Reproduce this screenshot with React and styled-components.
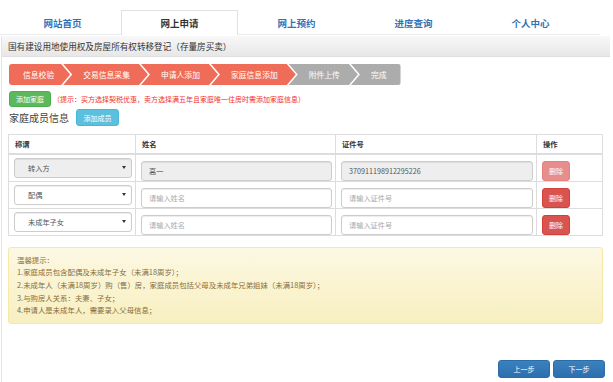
import React from "react";
import styled, { createGlobalStyle } from "styled-components";

const Global = createGlobalStyle`
  html, body { margin: 0; padding: 0; background: #fff; }
  body {
    width: 613px; height: 382px; overflow: hidden;
    font-family: "Noto Sans CJK SC", "Noto Sans", "Liberation Sans", sans-serif;
    color: #333;
  }
  * { box-sizing: border-box; }
`;

const Page = styled.div`
  width: 613px;
  height: 382px;
  display: flex;
  flex-direction: column;
`;

const TabBar = styled.nav`
  display: flex;
  padding: 10px 0 0 4px;
  height: 35px;
  width: 600px;
  border-bottom: 1px solid #ececec;
`;

const Tab = styled.div`
  width: 117px;
  height: 25px;
  display: flex;
  align-items: center;
  justify-content: center;
  font-size: 9.5px;
  font-weight: 700;
  color: ${(p) => (p.$active ? "#333" : "#3272b5")};
  background: ${(p) => (p.$active ? "#fff" : "transparent")};
  border: 1px solid ${(p) => (p.$active ? "#e2e2e2" : "transparent")};
  border-bottom: none;
  margin-bottom: -1px;
`;

const Main = styled.main`
  flex: 1;
  margin: 1px 0 0 1px;
  width: 609px;
  border-left: 1px solid #e4e4e4;
  display: flex;
  flex-direction: column;
`;

const TitleBar = styled.div`
  height: 21px;
  display: flex;
  align-items: center;
  padding-left: 6px;
  font-size: 8.6px;
  color: #333;
  background: linear-gradient(#f8f8f8, #e7e7e7);
  border-bottom: 1px solid #e0e0e0;
`;

const Content = styled.div`
  padding: 7px 5px 0 6px;
  display: flex;
  flex-direction: column;
`;

const Steps = styled.div`
  display: flex;
  align-self: flex-start;
  margin-left: 1px;
  height: 21px;
  border-radius: 3px;
  overflow: hidden;
`;

const Step = styled.div`
  height: 21px;
  display: flex;
  align-items: center;
  font-size: 7.8px;
  color: #fff;
  background: ${(p) => (p.$done ? "#ef6d58" : "#acacac")};
  padding: ${(p) => (p.$first ? "0 16px 0 14px" : p.$last ? "0 14px 0 20px" : "0 18px 0 20px")};
  margin-left: ${(p) => (p.$first ? "0" : "-7px")};
  clip-path: ${(p) =>
    p.$first
      ? "polygon(0 0, calc(100% - 9px) 0, 100% 50%, calc(100% - 9px) 100%, 0 100%)"
      : p.$last
      ? "polygon(0 0, 100% 0, 100% 100%, 0 100%, 9px 50%)"
      : "polygon(0 0, calc(100% - 9px) 0, 100% 50%, calc(100% - 9px) 100%, 0 100%, 9px 50%)"};
`;

const ActionRow = styled.div`
  display: flex;
  align-items: center;
  margin-top: 6px;
  margin-left: 1px;
`;

const Btn = styled.button`
  font-family: inherit;
  font-size: 7px;
  color: #fff;
  height: ${(p) => p.$h || 17}px;
  width: ${(p) => p.$w}px;
  padding: 0;
  border-radius: 3px;
  cursor: pointer;
  display: inline-flex;
  align-items: center;
  justify-content: center;
  background: ${(p) => p.$bg};
  border: 1px solid ${(p) => p.$bd};
  opacity: ${(p) => (p.$disabled ? 0.65 : 1)};
`;

const Hint = styled.span`
  margin-left: 2px;
  font-size: 7px;
  color: #f0302a;
`;

const SectionRow = styled.div`
  display: flex;
  align-items: center;
  margin-top: 2px;
  margin-left: 1px;
`;

const SectionTitle = styled.span`
  font-size: 10px;
  color: #444;
  margin-right: 7px;
`;

const Table = styled.table`
  margin-top: 8px;
  width: 595px;
  border-collapse: collapse;
  table-layout: fixed;
  border: 1px solid #ddd;
`;

const Th = styled.th`
  height: 19px;
  text-align: left;
  font-size: 7.3px;
  font-weight: 700;
  color: #333;
  padding: 0 6px;
  border: 1px solid #ddd;
  border-bottom: 2px solid #ddd;
  width: ${(p) => p.$w}px;
`;

const Td = styled.td`
  height: 26px;
  padding: 0 3px 0 5px;
  border: 1px solid #ddd;
  vertical-align: middle;
`;

const SelectBox = styled.div`
  height: 20px;
  display: flex;
  align-items: center;
  justify-content: space-between;
  padding: 0 5px 0 13px;
  font-size: 7.2px;
  color: #555;
  border: 1px solid #ccc;
  border-radius: 3px;
  background: ${(p) => (p.$disabled ? "#eee" : "#fff")};
  box-shadow: inset 0 1px 1px rgba(0, 0, 0, 0.075);
`;

const Caret = styled.span`
  width: 0;
  height: 0;
  border-left: 2px solid transparent;
  border-right: 2px solid transparent;
  border-top: 3px solid #333;
`;

const Input = styled.input`
  width: 100%;
  height: 20px;
  padding: 0 7px;
  font-family: inherit;
  font-size: 7.2px;
  color: #555;
  border: 1px solid #ccc;
  border-radius: 3px;
  background: ${(p) => (p.disabled ? "#eee" : "#fff")};
  box-shadow: inset 0 1px 1px rgba(0, 0, 0, 0.075);
  outline: none;
  &::placeholder { color: #aaa; }
`;

const Warning = styled.div`
  margin-top: 11px;
  width: 595px;
  height: 77px;
  padding: 6px 8px;
  border: 1px solid #f5e9a8;
  border-radius: 3px;
  background: linear-gradient(#fcf8e3, #f8efc0);
  color: #8a6d3b;
  font-size: 7.4px;
  line-height: 12.7px;
`;

const Footer = styled.div`
  display: flex;
  justify-content: flex-end;
  gap: 3px;
  margin-top: 36px;
`;

const steps = [
  { t: "信息校验", done: true },
  { t: "交易信息采集", done: true },
  { t: "申请人添加", done: true },
  { t: "家庭信息添加", done: true },
  { t: "附件上传", done: false },
  { t: "完成", done: false },
];

const rows = [
  { rel: "转入方", name: "高一", id: "370911198912295226", locked: true },
  { rel: "配偶", name: "", id: "", locked: false },
  { rel: "未成年子女", name: "", id: "", locked: false },
];

const tips = [
  "温馨提示：",
  "1.家庭成员包含配偶及未成年子女（未满18周岁）；",
  "2.未成年人（未满18周岁）购（售）房，家庭成员包括父母及未成年兄弟姐妹（未满18周岁）；",
  "3.与购房人关系：夫妻、子女；",
  "4.申请人是未成年人，需要录入父母信息；",
];

export default function App() {
  return (
    <Page>
      <Global />
      <TabBar>
        {["网站首页", "网上申请", "网上预约", "进度查询", "个人中心"].map((t) => (
          <Tab key={t} $active={t === "网上申请"}>{t}</Tab>
        ))}
      </TabBar>
      <Main>
        <TitleBar>国有建设用地使用权及房屋所有权转移登记（存量房买卖）</TitleBar>
        <Content>
          <Steps>
            {steps.map((s, i) => (
              <Step key={s.t} $done={s.done} $first={i === 0} $last={i === steps.length - 1}>
                {s.t}
              </Step>
            ))}
          </Steps>
          <ActionRow>
            <Btn $w={42} $h={16} $bg="#5cb85c" $bd="#4cae4c">添加家庭</Btn>
            <Hint>（提示：买方选择契税优惠，卖方选择满五年且家庭唯一住房时需添加家庭信息）</Hint>
          </ActionRow>
          <SectionRow>
            <SectionTitle>家庭成员信息</SectionTitle>
            <Btn $w={43} $h={17} $bg="#5bc0de" $bd="#46b8da">添加成员</Btn>
          </SectionRow>
          <Table>
            <thead>
              <tr>
                <Th $w={127}>称谓</Th>
                <Th $w={200}>姓名</Th>
                <Th $w={201}>证件号</Th>
                <Th>操作</Th>
              </tr>
            </thead>
            <tbody>
              {rows.map((r) => (
                <tr key={r.rel}>
                  <Td>
                    <SelectBox $disabled={r.locked}>
                      <span>{r.rel}</span>
                      <Caret />
                    </SelectBox>
                  </Td>
                  <Td>
                    <Input disabled={r.locked} defaultValue={r.name} placeholder="请输入姓名" />
                  </Td>
                  <Td>
                    <Input disabled={r.locked} defaultValue={r.id} placeholder="请输入证件号" />
                  </Td>
                  <Td>
                    <Btn $w={28} $h={20} $bg="#d9534f" $bd="#d43f3a" $disabled={r.locked}>删除</Btn>
                  </Td>
                </tr>
              ))}
            </tbody>
          </Table>
          <Warning>
            {tips.map((t) => (
              <div key={t}>{t}</div>
            ))}
          </Warning>
          <Footer>
            <Btn $w={52} $h={18} $bg="linear-gradient(#3a81c0, #2d6fae)" $bd="#2e6da4">上一步</Btn>
            <Btn $w={52} $h={18} $bg="linear-gradient(#3a81c0, #2d6fae)" $bd="#2e6da4">下一步</Btn>
          </Footer>
        </Content>
      </Main>
    </Page>
  );
}
